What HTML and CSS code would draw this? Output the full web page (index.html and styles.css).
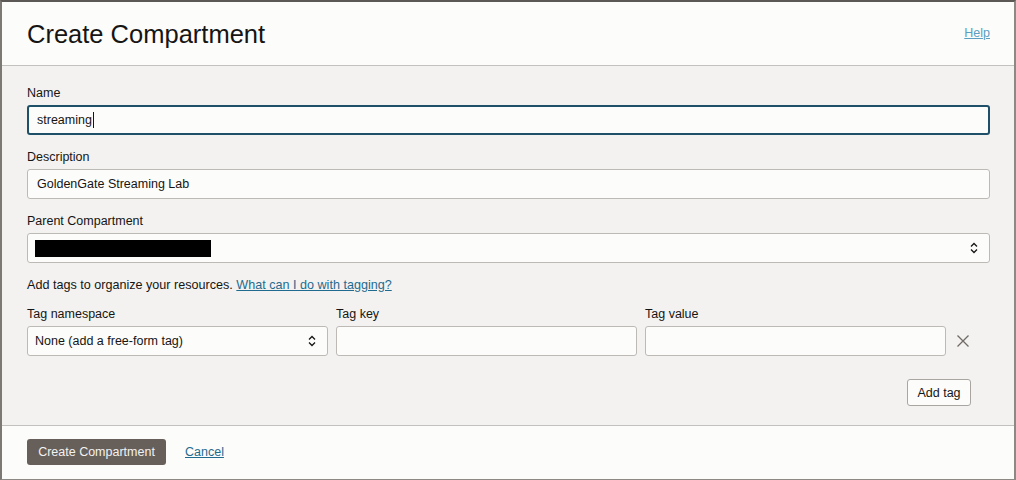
FILE: index.html
```html
<!DOCTYPE html>
<html>
<head>
<meta charset="utf-8">
<link rel="stylesheet" href="styles.css">
</head>
<body>
<div class="panel">
  <header class="head">
    <h1 class="title">Create Compartment</h1>
    <a class="help" href="#">Help</a>
  </header>
  <main class="body">
    <div class="field">
      <label class="label">Name</label>
      <div class="input focus"><span>streaming</span><span class="caret"></span></div>
    </div>
    <div class="field">
      <label class="label">Description</label>
      <div class="input"><span>GoldenGate Streaming Lab</span></div>
    </div>
    <div class="field">
      <label class="label">Parent Compartment</label>
      <div class="input select"><span class="redact"></span>
        <svg class="arrows" width="10" height="14" viewBox="0 0 10 14"><path d="M2 5.5 L5 2.5 L8 5.5 M2 8.5 L5 11.5 L8 8.5" fill="none" stroke="#161513" stroke-width="1.3"/></svg>
      </div>
    </div>
    <p class="tagsnote">Add tags to organize your resources. <a href="#" class="link">What can I do with tagging?</a></p>
    <div class="tagrow">
      <div class="tagcol">
        <label class="label">Tag namespace</label>
        <div class="input select"><span>None (add a free-form tag)</span>
          <svg class="arrows" width="10" height="14" viewBox="0 0 10 14"><path d="M2 5.5 L5 2.5 L8 5.5 M2 8.5 L5 11.5 L8 8.5" fill="none" stroke="#161513" stroke-width="1.3"/></svg>
        </div>
      </div>
      <div class="tagcol">
        <label class="label">Tag key</label>
        <div class="input"></div>
      </div>
      <div class="tagcol">
        <label class="label">Tag value</label>
        <div class="input"></div>
      </div>
      <div class="xcol">
        <svg width="14" height="14" viewBox="0 0 14 14"><path d="M1.5 1.5 L12.5 12.5 M12.5 1.5 L1.5 12.5" stroke="#6f6b67" stroke-width="1.3"/></svg>
      </div>
    </div>
    <div class="addrow"><button class="btn">Add tag</button></div>
  </main>
  <footer class="foot">
    <button class="primary">Create Compartment</button>
    <a class="link cancel" href="#">Cancel</a>
  </footer>
</div>
</body>
</html>
```
FILE: styles.css
```css
* { box-sizing: border-box; }
html, body { margin: 0; padding: 0; }
body {
  width: 1016px;
  height: 480px;
  font-family: "Liberation Sans", Arial, sans-serif;
  color: #161513;
  background: #fcfcfb;
  overflow: hidden;
}
.panel {
  width: 1016px;
  height: 480px;
  border-top: 2px solid #5b5855;
  border-left: 2px solid #7c7975;
  border-right: 2px solid #8c8985;
  border-bottom: 1px solid #8c8985;
  display: flex;
  flex-direction: column;
  background: #fcfcfb;
}
.head {
  height: 64px;
  flex: none;
  display: flex;
  align-items: center;
  justify-content: space-between;
  padding: 0 24px 0 25px;
  border-bottom: 1px solid #c3c1be;
  background: #fcfcfb;
}
.title {
  margin: 0;
  font-size: 25.5px;
  font-weight: 400;
  color: #161513;
  padding-top: 1px;
}
.help {
  font-size: 12.5px;
  color: #5b9ec0;
  text-decoration: underline;
  padding-bottom: 1px;
}
.body {
  flex: 1;
  background: #f3f2f1;
  padding: 20px 24px 0 25px;
}
.field { margin-bottom: 15px; }
.label {
  display: block;
  font-size: 12.5px;
  line-height: 15px;
  margin-bottom: 4px;
  color: #161513;
}
.input {
  height: 30px;
  background: #fcfcfb;
  border: 1px solid #bdbab6;
  border-radius: 3px;
  display: flex;
  align-items: center;
  padding: 0 9px;
  font-size: 12.5px;
  color: #161513;
  position: relative;
}
.input.focus {
  border: 2px solid #1f5069;
  padding: 0 8px;
}
.caret {
  display: inline-block;
  width: 1px;
  height: 16px;
  background: #161513;
  margin-left: 1px;
}
.select { justify-content: space-between; padding-left: 7px; padding-right: 10px; }
.arrows { flex: none; }
.redact {
  display: block;
  width: 176px;
  height: 17px;
  background: #000;
}
.tagsnote {
  margin: 0 0 14px;
  font-size: 12.6px;
  line-height: 15px;
}
.link { color: #1f6b8f; text-decoration: underline; }
.tagrow {
  display: grid;
  grid-template-columns: 301px 301px 301px 36px;
  column-gap: 8px;
}
.xcol {
  display: flex;
  align-items: center;
  padding-top: 19px;
  padding-left: 2px;
}
.addrow {
  display: flex;
  justify-content: flex-end;
  padding-right: 19px;
  margin-top: 23px;
}
.btn {
  font-family: inherit;
  font-size: 12.5px;
  height: 27px;
  width: 64px;
  padding: 0;
  background: #fcfcfb;
  color: #161513;
  border: 1px solid #a9a6a2;
  border-radius: 3px;
}
.foot {
  height: 54px;
  flex: none;
  border-top: 1px solid #c3c1be;
  background: #fcfcfb;
  display: flex;
  align-items: flex-start;
  padding: 13px 25px 0;
  gap: 19px;
}
.primary {
  font-family: inherit;
  font-size: 12.5px;
  height: 26px;
  width: 139px;
  padding: 0;
  background: #675f5a;
  color: #f3f2f1;
  border: none;
  border-radius: 3px;
}
.cancel {
  font-size: 12.5px;
  line-height: 26px;
}
```
